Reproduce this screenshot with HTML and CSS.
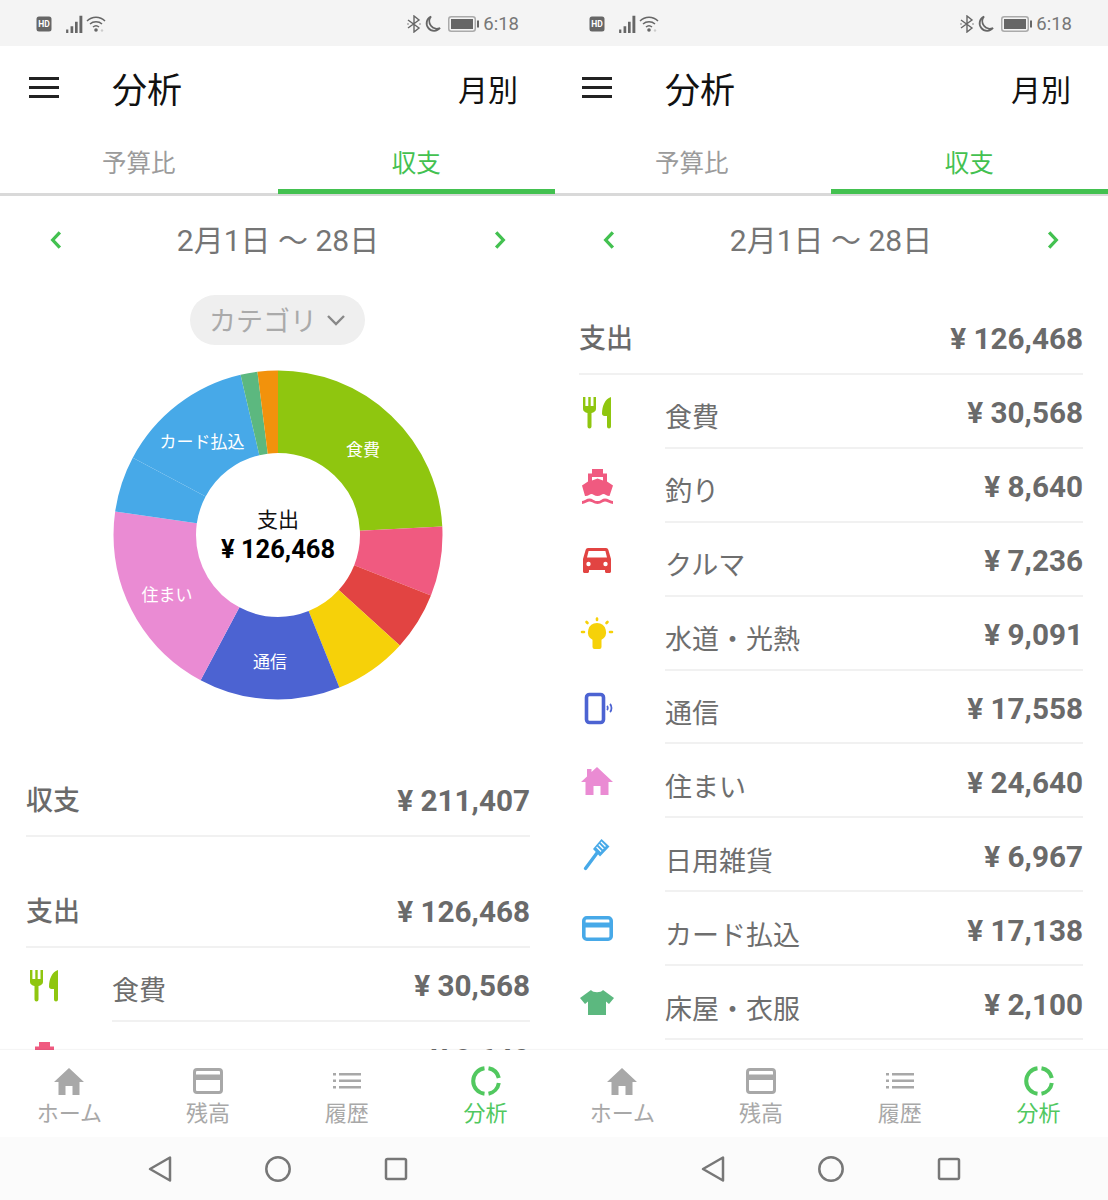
FILE: index.html
```html
<!DOCTYPE html>
<html lang="ja">
<head>
<meta charset="utf-8">
<title>分析</title>
<link rel="stylesheet" href="styles.css">
</head>
<body>
<svg class="sprite" aria-hidden="true">
  <symbol id="i-hd" viewBox="0 0 16 16"><rect x="0.5" y="0.5" width="15" height="15" rx="2.5" fill="#666"/><text x="8" y="11.2" class="hd-text">HD</text></symbol>
  <symbol id="i-signal" viewBox="0 0 18 16"><path d="M1 13h2v3H1zM5 10h2.400v6H5zM9 6h2.400v10H9zM13 .5h2.600V16H13z" fill="#666"/></symbol>
  <symbol id="i-wifi" viewBox="0 0 20 18"><path d="M1 6c5-5 13-5 18 0M4 9c3.300-3 8.700-3 12 0M7 12c1.700-1.500 4.300-1.500 6 0" fill="none" stroke="#666" stroke-width="1.500"/><circle cx="10" cy="15" r="1.800" fill="#666"/><circle cx="16" cy="15.500" r="1.200" fill="#ccc"/></symbol>
  <symbol id="i-bt" viewBox="0 0 14 18"><path d="M1 5l11 8-5 4V1l5 4L1 13M1.500 9h-1M13.500 9h-1" fill="none" stroke="#666" stroke-width="1.400"/></symbol>
  <symbol id="i-moon" viewBox="0 0 16 18"><path d="M6 1.500A7.500 7.500 0 1 0 15 13 7.500 7.500 0 0 1 6 1.500z" fill="none" stroke="#666" stroke-width="1.800"/></symbol>
  <symbol id="i-battery" viewBox="0 0 32 16"><rect x="0.750" y="0.750" width="26.500" height="14.500" rx="2.500" fill="none" stroke="#aaa" stroke-width="1.500"/><rect x="3" y="3" width="22" height="10" fill="#666"/><rect x="29" y="4.500" width="2" height="7" fill="#666"/></symbol>

  <symbol id="i-food" viewBox="0 0 36 36"><path fill="#8fc60f" d="M4 2h2.400v9h2.900V2h2.400v9h2.800V2H17v12c0 2-2 3.500-4.500 4v13.500a2 2 0 0 1-4 0V18C6 17.500 4 16 4 14zM32 2v29.500a2 2 0 0 1-4 0V21h-2.500c-1.500 0-2.500-1-2.500-2.500C23 11 26 4 32 2z"/></symbol>
  <symbol id="i-ship" viewBox="0 0 36 36"><path fill="#f05a80" fill-rule="evenodd" d="M13 0h11v4.500h4v8l6 4-3.500 10.500c-3 0-4.500-2-6-2s-3 2-6 2-4.500-2-6-2-3 2-6 2h-.5L3 16.500l6-4v-8h4zM13 8v3.500l5.500-2 5.500 2V8z"/><path fill="none" stroke="#f05a80" stroke-width="2.800" d="M3 33.500c3 0 4.500-2.500 7.500-2.500s4 2.500 8 2.500 4.500-2.500 7.500-2.500 5 2.500 8 2.500"/></symbol>
  <symbol id="i-car" viewBox="0 0 36 36"><path fill="#e24442" fill-rule="evenodd" d="M9 5h18c1.200 0 2 .7 2.400 2L32 16v12.500c0 .8-.7 1.500-1.500 1.500h-3c-.8 0-1.500-.7-1.500-1.500V27H10v1.500c0 .8-.7 1.500-1.500 1.500h-3C4.700 30 4 29.300 4 28.500V16l2.600-9C7 5.700 7.800 5 9 5zM8 14.500h20l-1.600-6.500H9.600z"/><circle cx="9.500" cy="21" r="2.200" fill="#fff"/><circle cx="26.500" cy="21" r="2.200" fill="#fff"/></symbol>
  <symbol id="i-bulb" viewBox="0 0 36 36"><path fill="#f6d109" d="M18 6a9 9 0 0 1 4.500 16.800V30a2 2 0 0 1-2 2h-5a2 2 0 0 1-2-2v-7.200A9 9 0 0 1 18 6z"/><path fill="none" stroke="#f6d109" stroke-width="2.600" stroke-linecap="round" d="M18 1.500v1.500M7.500 5l1 1M28.500 5l-1 1M3 15h2M31 15h2"/></symbol>
  <symbol id="i-phone" viewBox="0 0 36 36"><rect x="7.500" y="3.500" width="17" height="28" rx="3" fill="none" stroke="#4c63d2" stroke-width="3.600"/><path fill="none" stroke="#4c63d2" stroke-width="1.800" d="M28 15c1 1 1 3 0 4M31 13c2 2 2 6 0 8"/></symbol>
  <symbol id="i-house" viewBox="0 0 36 36"><path fill="#ea8bd3" d="M18 3l16 15h-4.500v13h-8v-9h-7v9h-8V18H2l6-5.500V5h4.500v3z"/></symbol>
  <symbol id="i-brush" viewBox="0 0 36 36"><path fill="#47a9e8" d="M22.500 1L30.500 8.500 21 18.500 14 11z"/><path fill="none" stroke="#47a9e8" stroke-width="3.400" stroke-linecap="round" d="M18 15L6.500 30.500"/><path fill="none" stroke="#fff" stroke-width="1.300" d="M22 4l4.500 4.500M19.800 6.500l4.500 4.500M17.600 9l4.500 4.500"/></symbol>
  <symbol id="i-card" viewBox="0 0 36 36"><rect x="4.800" y="5.800" width="27.400" height="21.400" rx="3" fill="none" stroke="#47a9e8" stroke-width="3.600"/><rect x="4" y="10.500" width="29" height="5" fill="#47a9e8"/></symbol>
  <symbol id="i-shirt" viewBox="0 0 36 36"><path fill="#5cb87f" d="M12 4c2 3 10 3 12 0l11 8-5 6-3-2.500V29H9V15.500L6 18l-5-6z"/></symbol>

  <symbol id="n-home" viewBox="0 0 32 32"><path fill="#a8a8a8" d="M16 3l15 14h-4.500v13h-7v-9h-7v9h-7V17H1z"/></symbol>
  <symbol id="n-card" viewBox="0 0 32 32"><rect x="2.500" y="4.500" width="27" height="23" rx="2.500" fill="none" stroke="#a8a8a8" stroke-width="3"/><rect x="2" y="9.500" width="28" height="5.500" fill="#a8a8a8"/></symbol>
  <symbol id="n-list" viewBox="0 0 32 32"><path fill="#a8a8a8" d="M2 8h3v2.500H2zM8 8h22v2.500H8zM2 14.500h3V17H2zM8 14.500h22V17H8zM2 21h3v2.500H2zM8 21h22v2.500H8z"/></symbol>
  <symbol id="n-donut" viewBox="0 0 32 32"><g fill="none" stroke="#51c85f" stroke-width="4"><path d="M14.500 3.200A12.900 12.900 0 0 0 14.500 28.800"/><path d="M18.500 3.300A12.900 12.900 0 0 1 28.800 13"/><path d="M28.800 18A12.900 12.900 0 0 1 18.500 28.700"/></g></symbol>
  <symbol id="s-back" viewBox="0 0 28 28"><path fill="none" stroke="#777" stroke-width="2.500" stroke-linejoin="round" d="M24 2.500v23L4 14z"/></symbol>
  <symbol id="s-home" viewBox="0 0 28 28"><circle cx="14" cy="14" r="11.700" fill="none" stroke="#777" stroke-width="2.500"/></symbol>
  <symbol id="s-recent" viewBox="0 0 28 28"><rect x="4" y="4" width="20" height="20" rx="1.500" fill="none" stroke="#777" stroke-width="2.500"/></symbol>
  <symbol id="i-left" viewBox="0 0 16 20"><path fill="none" stroke="#43c150" stroke-width="3" d="M11.500 3L5 10l6.500 7"/></symbol>
  <symbol id="i-right" viewBox="0 0 16 20"><path fill="none" stroke="#43c150" stroke-width="3" d="M4.500 3L11 10l-6.500 7"/></symbol>
</svg>

<main class="screens">
  <section class="phone phone-front">
    <header class="status">
      <div class="status-group">
        <svg class="st st-hd"><use href="#i-hd"/></svg>
        <svg class="st st-signal"><use href="#i-signal"/></svg>
        <svg class="st st-wifi"><use href="#i-wifi"/></svg>
      </div>
      <div class="status-group">
        <svg class="st st-bt"><use href="#i-bt"/></svg>
        <svg class="st st-moon"><use href="#i-moon"/></svg>
        <svg class="st st-batt"><use href="#i-battery"/></svg>
        <span class="clock">6:18</span>
      </div>
    </header>
    <div class="appbar">
      <div class="burger"><i></i><i></i><i></i></div>
      <h1 class="title">分析</h1>
      <span class="mode">月別</span>
    </div>
    <nav class="tabs">
      <span class="tab">予算比</span>
      <span class="tab tab-on">収支</span>
    </nav>
    <div class="scroll">
      <div class="date-row">
        <svg class="chev"><use href="#i-left"/></svg>
        <span class="date">2月1日 〜 28日</span>
        <svg class="chev"><use href="#i-right"/></svg>
      </div>
      <div class="pill-row">
        <div class="pill"><span>カテゴリ</span><svg class="pill-arrow" viewBox="0 0 20 12"><path d="M2 2l8 8 8-8" fill="none" stroke="#888" stroke-width="2.400"/></svg></div>
      </div>
      <div class="chart-row">
        <svg class="donut" viewBox="0 0 330 330">
          <g class="ring" fill="none" stroke-width="82.500">
            <circle cx="165" cy="165" r="123.250" pathLength="126468" stroke="#8fc60f" stroke-dasharray="30568 95900" stroke-dashoffset="0"/>
            <circle cx="165" cy="165" r="123.250" pathLength="126468" stroke="#f05a80" stroke-dasharray="8640 117828" stroke-dashoffset="-30568"/>
            <circle cx="165" cy="165" r="123.250" pathLength="126468" stroke="#e24442" stroke-dasharray="7236 119232" stroke-dashoffset="-39208"/>
            <circle cx="165" cy="165" r="123.250" pathLength="126468" stroke="#f6d109" stroke-dasharray="9091 117377" stroke-dashoffset="-46444"/>
            <circle cx="165" cy="165" r="123.250" pathLength="126468" stroke="#4c63d2" stroke-dasharray="17558 108910" stroke-dashoffset="-55535"/>
            <circle cx="165" cy="165" r="123.250" pathLength="126468" stroke="#ea8bd3" stroke-dasharray="24640 101828" stroke-dashoffset="-73093"/>
            <circle cx="165" cy="165" r="123.250" pathLength="126468" stroke="#47a9e8" stroke-dasharray="6950 119518" stroke-dashoffset="-97733"/>
            <circle cx="165" cy="165" r="123.250" pathLength="126468" stroke="#47a9e8" stroke-dasharray="17138 109330" stroke-dashoffset="-104700"/>
            <circle cx="165" cy="165" r="123.250" pathLength="126468" stroke="#5cb87f" stroke-dasharray="2100 124368" stroke-dashoffset="-121838"/>
            <circle cx="165" cy="165" r="123.250" pathLength="126468" stroke="#f2920c" stroke-dasharray="2530 123938" stroke-dashoffset="-123938"/>
          </g>
          <text class="slice-label" x="250" y="86">食費</text>
          <text class="slice-label" x="89" y="78">カード払込</text>
          <text class="slice-label" x="54" y="231">住まい</text>
          <text class="slice-label" x="157" y="298">通信</text>
          <text class="center-label" x="165" y="157">支出</text>
          <text class="center-total" x="165" y="188">¥ 126,468</text>
        </svg>
      </div>
      <div class="sum-row sum-balance"><span class="sum-name">収支</span><span class="amount">¥ 211,407</span></div>
      <div class="sum-row sum-expense"><span class="sum-name">支出</span><span class="amount">¥ 126,468</span></div>
      <div class="row">
        <svg class="cat-icon"><use href="#i-food"/></svg>
        <div class="row-body"><span class="label">食費</span><span class="amount">¥ 30,568</span></div>
      </div>
      <div class="row">
        <svg class="cat-icon"><use href="#i-ship"/></svg>
        <div class="row-body"><span class="label">釣り</span><span class="amount">¥ 8,640</span></div>
      </div>
    </div>
    <footer class="bottom">
      <div class="nav-item"><svg class="nav-icon"><use href="#n-home"/></svg><span>ホーム</span></div>
      <div class="nav-item"><svg class="nav-icon"><use href="#n-card"/></svg><span>残高</span></div>
      <div class="nav-item"><svg class="nav-icon"><use href="#n-list"/></svg><span>履歴</span></div>
      <div class="nav-item nav-on"><svg class="nav-icon"><use href="#n-donut"/></svg><span>分析</span></div>
    </footer>
    <div class="system">
      <svg class="sys"><use href="#s-back"/></svg>
      <svg class="sys"><use href="#s-home"/></svg>
      <svg class="sys"><use href="#s-recent"/></svg>
    </div>
  </section>

  <section class="phone phone-back">
    <header class="status">
      <div class="status-group">
        <svg class="st st-hd"><use href="#i-hd"/></svg>
        <svg class="st st-signal"><use href="#i-signal"/></svg>
        <svg class="st st-wifi"><use href="#i-wifi"/></svg>
      </div>
      <div class="status-group">
        <svg class="st st-bt"><use href="#i-bt"/></svg>
        <svg class="st st-moon"><use href="#i-moon"/></svg>
        <svg class="st st-batt"><use href="#i-battery"/></svg>
        <span class="clock">6:18</span>
      </div>
    </header>
    <div class="appbar">
      <div class="burger"><i></i><i></i><i></i></div>
      <h1 class="title">分析</h1>
      <span class="mode">月別</span>
    </div>
    <nav class="tabs">
      <span class="tab">予算比</span>
      <span class="tab tab-on">収支</span>
    </nav>
    <div class="scroll">
      <div class="date-row">
        <svg class="chev"><use href="#i-left"/></svg>
        <span class="date">2月1日 〜 28日</span>
        <svg class="chev"><use href="#i-right"/></svg>
      </div>
      <div class="sum-row sum-top"><span class="sum-name">支出</span><span class="amount">¥ 126,468</span></div>
      <div class="row">
        <svg class="cat-icon"><use href="#i-food"/></svg>
        <div class="row-body"><span class="label">食費</span><span class="amount">¥ 30,568</span></div>
      </div>
      <div class="row">
        <svg class="cat-icon"><use href="#i-ship"/></svg>
        <div class="row-body"><span class="label">釣り</span><span class="amount">¥ 8,640</span></div>
      </div>
      <div class="row">
        <svg class="cat-icon"><use href="#i-car"/></svg>
        <div class="row-body"><span class="label">クルマ</span><span class="amount">¥ 7,236</span></div>
      </div>
      <div class="row">
        <svg class="cat-icon"><use href="#i-bulb"/></svg>
        <div class="row-body"><span class="label">水道・光熱</span><span class="amount">¥ 9,091</span></div>
      </div>
      <div class="row">
        <svg class="cat-icon"><use href="#i-phone"/></svg>
        <div class="row-body"><span class="label">通信</span><span class="amount">¥ 17,558</span></div>
      </div>
      <div class="row">
        <svg class="cat-icon"><use href="#i-house"/></svg>
        <div class="row-body"><span class="label">住まい</span><span class="amount">¥ 24,640</span></div>
      </div>
      <div class="row">
        <svg class="cat-icon"><use href="#i-brush"/></svg>
        <div class="row-body"><span class="label">日用雑貨</span><span class="amount">¥ 6,967</span></div>
      </div>
      <div class="row">
        <svg class="cat-icon"><use href="#i-card"/></svg>
        <div class="row-body"><span class="label">カード払込</span><span class="amount">¥ 17,138</span></div>
      </div>
      <div class="row">
        <svg class="cat-icon"><use href="#i-shirt"/></svg>
        <div class="row-body"><span class="label">床屋・衣服</span><span class="amount">¥ 2,100</span></div>
      </div>
    </div>
    <footer class="bottom">
      <div class="nav-item"><svg class="nav-icon"><use href="#n-home"/></svg><span>ホーム</span></div>
      <div class="nav-item"><svg class="nav-icon"><use href="#n-card"/></svg><span>残高</span></div>
      <div class="nav-item"><svg class="nav-icon"><use href="#n-list"/></svg><span>履歴</span></div>
      <div class="nav-item nav-on"><svg class="nav-icon"><use href="#n-donut"/></svg><span>分析</span></div>
    </footer>
    <div class="system">
      <svg class="sys"><use href="#s-back"/></svg>
      <svg class="sys"><use href="#s-home"/></svg>
      <svg class="sys"><use href="#s-recent"/></svg>
    </div>
  </section>
</main>
</body>
</html>
```

FILE: styles.css
```css
* { box-sizing: border-box; }
html, body { margin: 0; padding: 0; background: #fff; }
body {
  width: 1108px;
  height: 1200px;
  overflow: hidden;
  font-family: Roboto, "Noto Sans CJK JP", sans-serif;
}
.sprite { position: absolute; width: 0; height: 0; overflow: hidden; }
.hd-text { font: 700 8.5px Roboto, sans-serif; fill: #fff; text-anchor: middle; }

.screens { display: flex; width: 1108px; height: 1200px; }
.phone { width: 555px; height: 1200px; flex: none; display: flex; flex-direction: column; background: #fff; overflow: hidden; }
.phone-front { position: relative; z-index: 1; }
.phone-back { margin-left: -2px; }

/* status bar */
.status { height: 46px; flex: none; background: #f4f4f4; display: flex; justify-content: space-between; align-items: center; padding: 2px 36px 0 36px; }
.status-group { display: flex; align-items: center; }
.st { display: block; }
.st-hd { width: 16px; height: 16px; }
.st-signal { width: 20px; height: 18px; margin-left: 13px; }
.st-wifi { width: 20px; height: 18px; margin-left: 1px; }
.st-bt { width: 14px; height: 18px; }
.st-moon { width: 16px; height: 18px; margin-left: 4px; }
.st-batt { width: 32px; height: 16px; margin-left: 7px; }
.clock { font-size: 18.500px; color: #777; margin-left: 3px; line-height: 44px; }

/* app bar */
.appbar { height: 84px; flex: none; display: flex; align-items: center; padding: 6px 37px 0 29px; }
.burger { width: 30px; display: flex; flex-direction: column; gap: 6px; margin-top: -8px; }
.burger i { display: block; height: 3px; background: #222; }
.title { margin: 0 0 0 53px; font-size: 35px; font-weight: 400; color: #111; flex: 1; line-height: 1; }
.mode { font-size: 30px; color: #111; line-height: 1; }

/* tabs */
.tabs { height: 66px; flex: none; display: grid; grid-template-columns: 1fr 1fr; border-bottom: 3px solid #d9d9d9; }
.tab { display: flex; align-items: center; justify-content: center; font-size: 24.500px; color: #9b9b9b; height: 63px; }
.tab-on { color: #43c150; border-bottom: 5px solid #43c150; height: 64px; padding-top: 4px; }

/* scroll area */
.scroll { flex: 1; min-height: 0; overflow: hidden; }
.date-row { height: 88px; display: flex; align-items: center; justify-content: space-between; padding: 0 46px 0 47px; }
.chev { width: 18px; height: 22px; }
.date { font-size: 30px; color: #757575; font-weight: 400; padding-bottom: 4px; }

.pill-row { display: flex; justify-content: center; padding-top: 11px; }
.pill { width: 175px; height: 50px; border-radius: 25px; background: #efefef; display: flex; align-items: center; justify-content: center; gap: 9px; font-size: 27px; color: #aaa; padding-bottom: 2px; }
.pill-arrow { width: 20px; height: 12px; margin-top: 2px; }

.chart-row { display: flex; justify-content: center; padding-top: 25px; height: 418px; }
.donut { width: 330px; height: 330px; display: block; }
.ring { transform: rotate(-90deg); transform-origin: 165px 165px; }
.slice-label { font-size: 17px; fill: #fff; text-anchor: middle; }
.center-label { font-size: 21px; fill: #111; text-anchor: middle; }
.center-total { font-size: 25.500px; font-weight: 700; fill: #000; text-anchor: middle; }

/* sums and rows */
.sum-row { margin: 0 25px 0 26px; height: 74px; display: flex; align-items: center; justify-content: space-between; border-bottom: 2px solid #f1f1f1; padding-top: 2px; }
.sum-expense { margin-top: 37px; }
.sum-top { margin-top: 17px; }
.sum-name { font-size: 27px; font-weight: 500; color: #6a6a6a; padding-bottom: 4px; }
.amount { font-size: 29.700px; font-weight: 700; color: #6a6a6a; }

.row { display: flex; height: 73.900px; margin: 0 25px 0 26px; }
.cat-icon { width: 36px; height: 36px; flex: none; margin-top: 20px; margin-right: 50px; }
.row-body { flex: 1; display: flex; justify-content: space-between; align-items: center; border-bottom: 2px solid #f1f1f1; }
.label { font-size: 27px; color: #6e6e6e; padding-top: 10px; }
.row-body .amount { padding-top: 4px; }

/* bottom nav */
.bottom { height: 87px; flex: none; background: #fff; display: grid; grid-template-columns: repeat(4, 138.750px); box-shadow: 0 -1px 1px rgba(0,0,0,.04); position: relative; }
.nav-item { display: flex; flex-direction: column; align-items: center; font-size: 22px; color: #a8a8a8; padding-top: 15px; line-height: 32px; }
.nav-icon { width: 32px; height: 32px; }
.nav-item span { margin-top: 1px; }
.nav-on { color: #51c85f; }

/* system bar */
.system { height: 63px; flex: none; background: #fbfbfb; display: flex; justify-content: center; align-items: center; gap: 90px; }
.sys { width: 28px; height: 28px; }
```
